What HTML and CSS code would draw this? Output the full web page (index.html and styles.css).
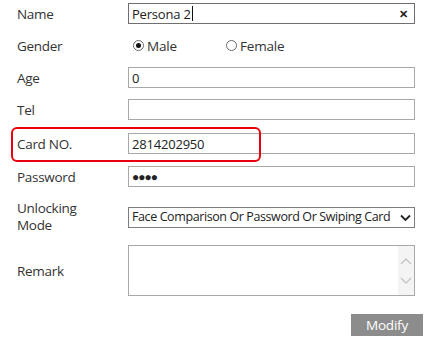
FILE: index.html
```html
<html>
<head>
<title>Modify Person</title>
<meta charset="utf-8">
<link rel="stylesheet" href="styles.css">
</head>
<body>
<div class="person-form">
	<div class="row">
		<label class="label">Name</label>
		<div class="field field-focus">
			<span class="value">Persona 2</span><span class="caret"></span>
			<span class="clear">&#x2715;</span>
		</div>
	</div>
	<div class="row row-gender">
		<label class="label">Gender</label>
		<div class="radios">
			<span class="radio checked"><span class="dot"></span>Male</span>
			<span class="radio"><span class="dot"></span>Female</span>
		</div>
	</div>
	<div class="row">
		<label class="label">Age</label>
		<input class="input" type="text" value="0">
	</div>
	<div class="row">
		<label class="label">Tel</label>
		<input class="input" type="text" value="">
	</div>
	<div class="row row-card">
		<label class="label">Card NO.</label>
		<input class="input" type="text" value="2814202950">
		<div class="highlight"></div>
	</div>
	<div class="row row-pass">
		<label class="label">Password</label>
		<input class="input input-pass" type="text" value="&#x25CF;&#x25CF;&#x25CF;&#x25CF;">
	</div>
	<div class="row row-mode">
		<label class="label label-two">Unlocking<br>Mode</label>
		<div class="select-wrap">
			<select class="select">
				<option>Face Comparison Or Password Or Swiping Card</option>
			</select>
			<svg class="chevron" width="11" height="8" viewBox="0 0 11 8"><path d="M1 1.5 L5.5 6 L10 1.5" fill="none" stroke="#222" stroke-width="1.8"/></svg>
		</div>
	</div>
	<div class="row row-remark">
		<label class="label">Remark</label>
		<div class="area-wrap">
			<textarea class="area"></textarea>
			<div class="scroll">
				<svg width="12" height="8" viewBox="0 0 12 8"><path d="M1 7 L6 2 L11 7" fill="none" stroke="#c4c4c4" stroke-width="1.3"/></svg>
				<svg width="12" height="8" viewBox="0 0 12 8"><path d="M1 1 L6 6 L11 1" fill="none" stroke="#c4c4c4" stroke-width="1.3"/></svg>
			</div>
		</div>
	</div>
	<div class="actions">
		<button class="button">Modify</button>
	</div>
</div>
</body>
</html>
```

FILE: styles.css
```css
body{
	margin:0;
	background:#fff;
	color:#333;
	font:400 13.5px/16px 'Open Sans',sans-serif;
}
*,:after,:before{box-sizing:border-box}

.person-form{
	width:406px;
	margin-left:17px;
	padding-top:3px;
	display:flex;
	flex-direction:column;
	gap:11px;
}
.row{
	display:grid;
	grid-template-columns:111px 287px;
	align-items:center;
	height:21px;
	position:relative;
}
.row-card{margin-top:2px}
.row-pass{margin-top:1px}
.row-mode{height:32px;margin-top:2px}
.row-remark{height:51px;margin-top:2px}

.label{
	color:#333;
	font-size:13.5px;
	letter-spacing:-0.3px;
}
.label-two{line-height:17px}

.field,
.input,
.select,
.area{
	width:287px;
	height:21px;
	border:1px solid #a8a8a8;
	background:#fff;
	color:#222;
	font:400 13px/16px 'Open Sans',sans-serif;
	letter-spacing:-0.2px;
	padding:0 3px;
	margin:0;
	outline:none;
	border-radius:0;
}
.field{
	display:flex;
	align-items:center;
	position:relative;
}
.field-focus{border-color:#6f6f6f}
.caret{
	display:inline-block;
	width:1px;
	height:15px;
	background:#111;
	margin-left:1px;
}
.clear{
	position:absolute;
	right:6px;
	top:2px;
	font-size:11px;
	font-weight:700;
	color:#222;
}

.radios{
	display:flex;
	padding-left:5px;
}
.radio{
	display:flex;
	align-items:center;
	gap:3px;
	font-size:13.5px;
	letter-spacing:-0.2px;
}
.radio.checked{width:93px}
.radio .dot{
	width:11px;
	height:11px;
	border:1px solid #6a6a6a;
	border-radius:50%;
	display:inline-flex;
	align-items:center;
	justify-content:center;
}
.radio.checked .dot:after{
	content:'';
	width:5px;
	height:5px;
	border-radius:50%;
	background:#111;
}

.input-pass{
	font-size:12px;
	letter-spacing:-1px;
}

.highlight{
	position:absolute;
	left:-6px;
	top:-6px;
	width:250px;
	height:35px;
	border:2px solid #e8000c;
	border-radius:6px;
	pointer-events:none;
}

.select-wrap{position:relative}
.select{
	appearance:none;
	-webkit-appearance:none;
	border-color:#7d7d7d;
	padding-left:3px;
	font-size:12.5px;
	letter-spacing:-0.4px;
}
.chevron{
	position:absolute;
	right:4px;
	top:7px;
}

.area-wrap{
	position:relative;
	height:51px;
}
.area{
	height:51px;
	resize:none;
	overflow:hidden;
}
.scroll{
	position:absolute;
	right:1px;
	top:1px;
	bottom:1px;
	width:16px;
	background:#f4f4f4;
	display:flex;
	flex-direction:column;
	justify-content:center;
	align-items:center;
	gap:12px;
}

.actions{
	display:flex;
	justify-content:flex-end;
	margin-top:7px;
}
.button{
	width:72px;
	height:22px;
	border:none;
	background:#8c8c8c;
	color:#fff;
	font:400 13.5px/16px 'Open Sans',sans-serif;
	letter-spacing:-0.2px;
	padding:0;
}
```
